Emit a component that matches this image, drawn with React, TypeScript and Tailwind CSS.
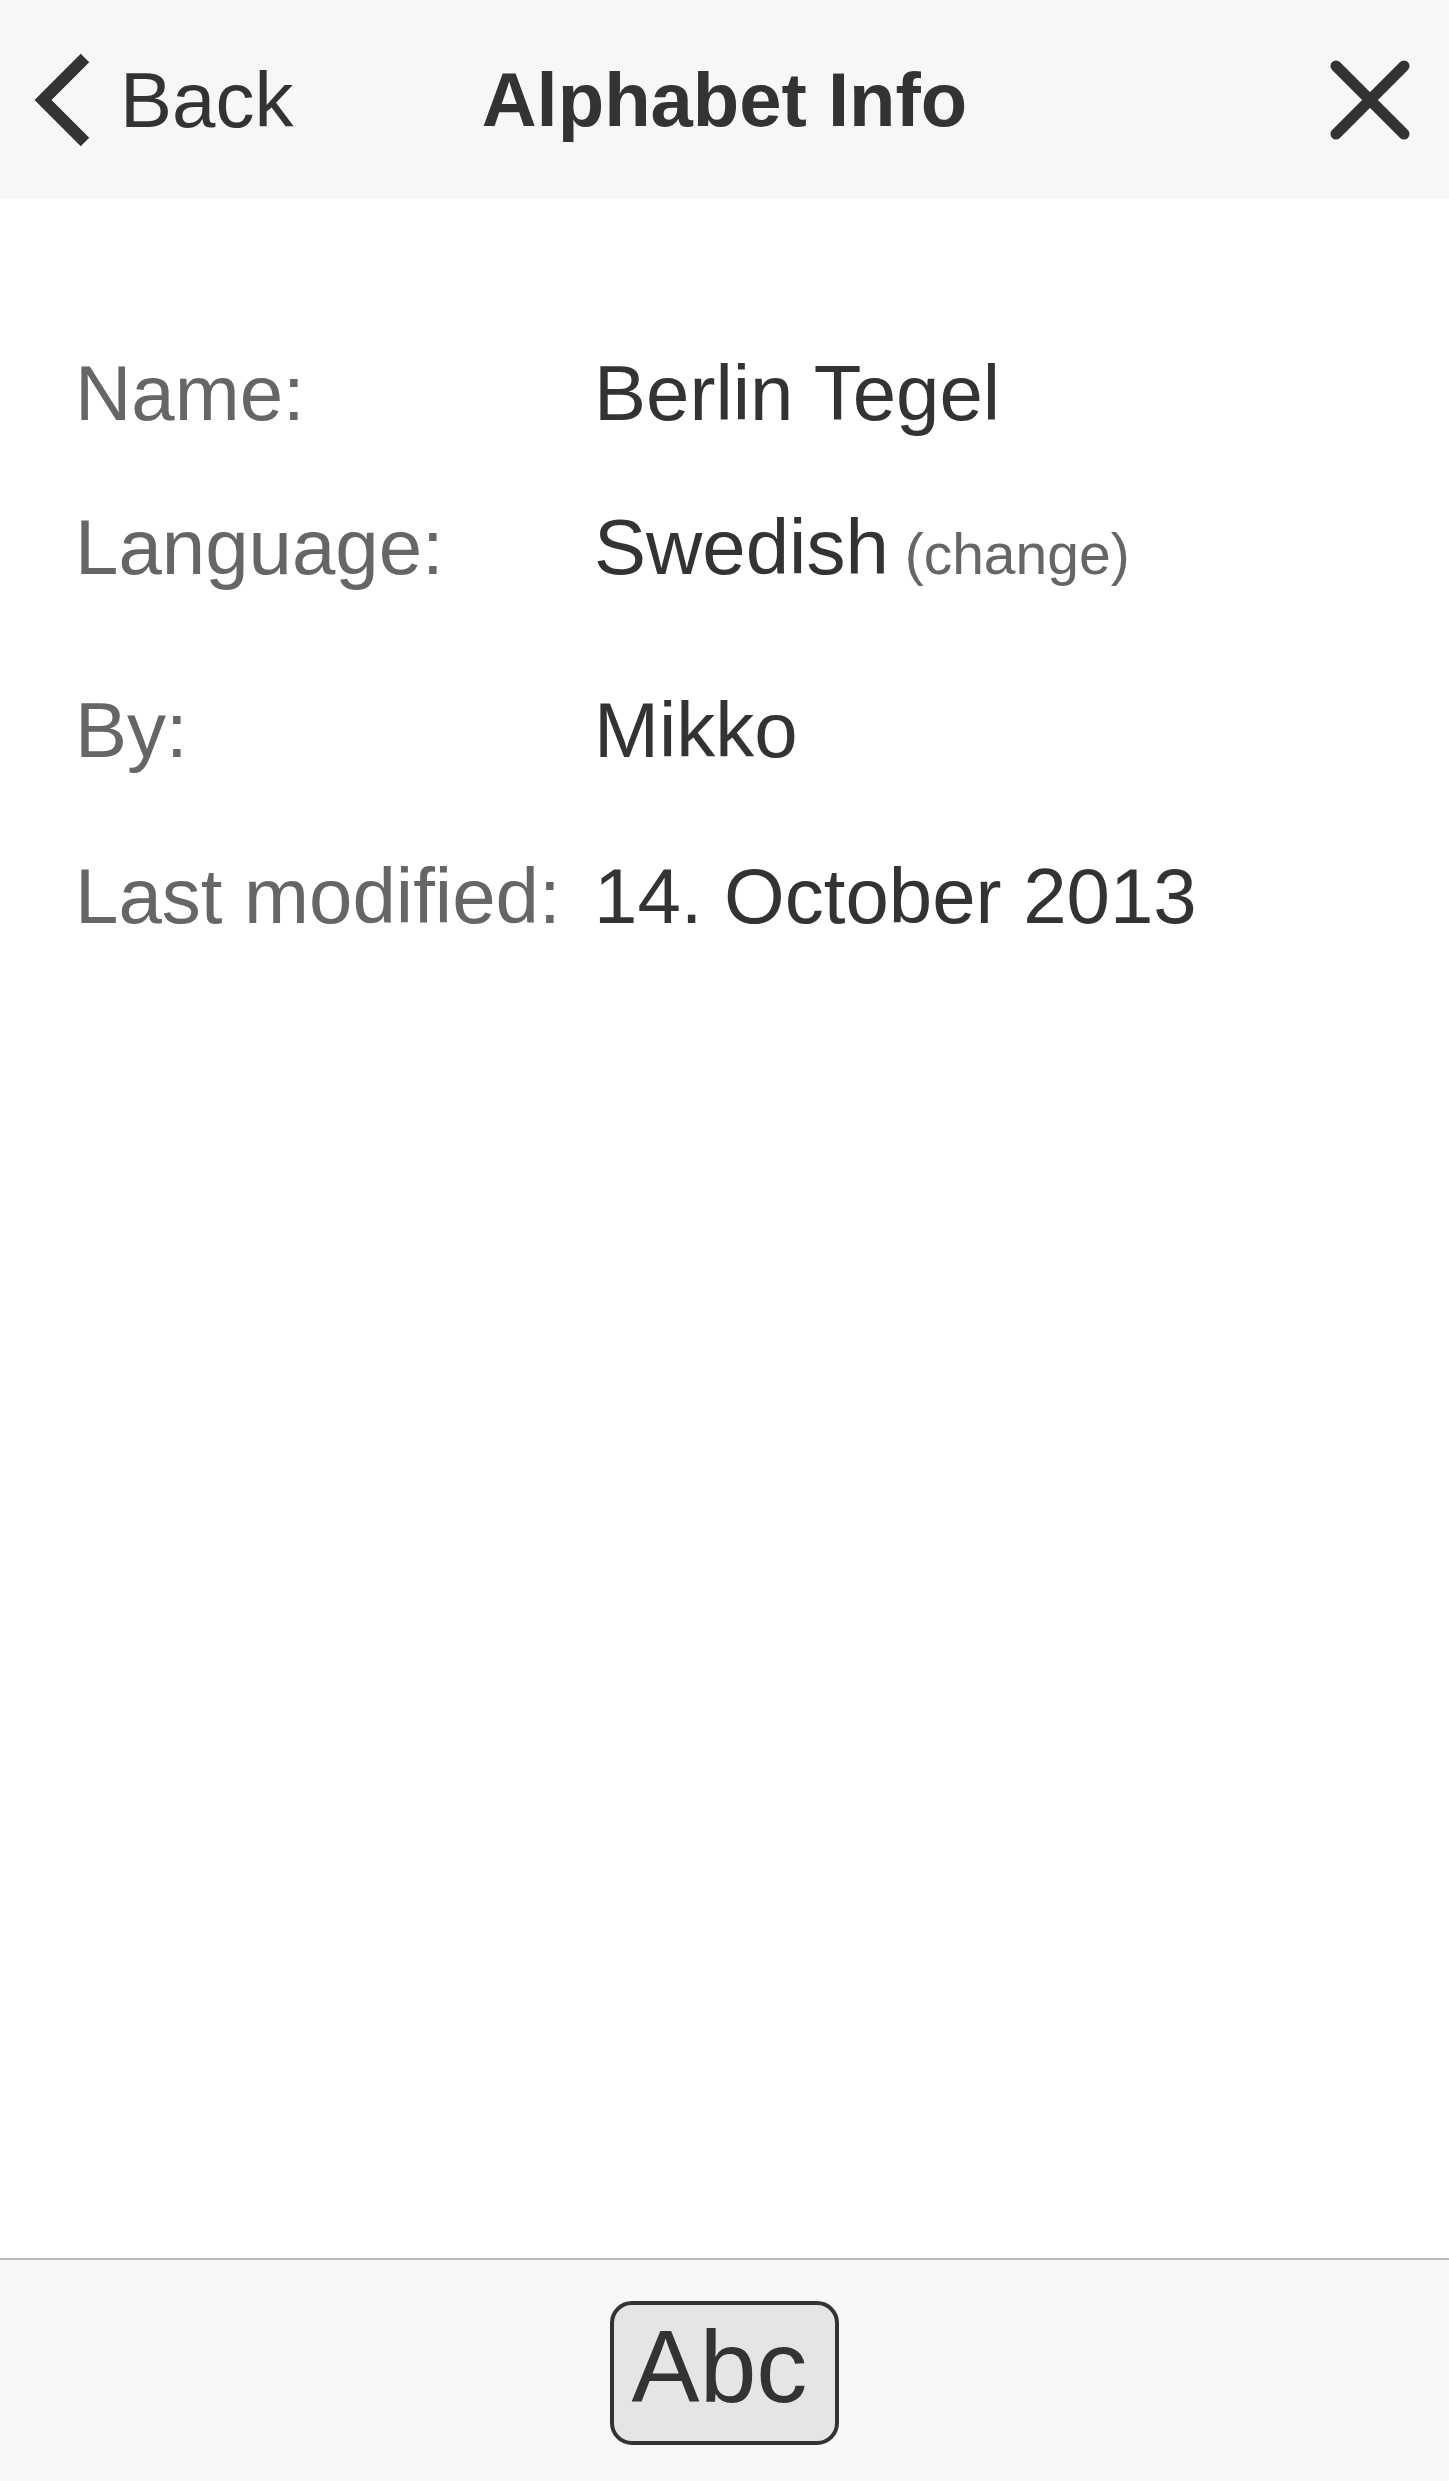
function ChevronLeft() {
  return (
    <svg width="60" height="96" viewBox="0 0 60 96" fill="none" aria-hidden>
      <path d="M53 6 L11 48 L53 90" stroke="#333333" strokeWidth="12" strokeLinecap="butt" strokeLinejoin="miter" />
    </svg>
  )
}

function CloseIcon() {
  return (
    <svg width="84" height="84" viewBox="0 0 84 84" fill="none" aria-hidden>
      <path d="M8 8 L76 76 M76 8 L8 76" stroke="#333333" strokeWidth="11" strokeLinecap="round" />
    </svg>
  )
}

function InfoRow({ label, children, className = '' }: { label: string; children: React.ReactNode; className?: string }) {
  return (
    <div className={`grid grid-cols-[519px_1fr] leading-[88px] ${className}`}>
      <div className="text-[#666666]">{label}</div>
      <div className="text-[#333333] whitespace-nowrap">{children}</div>
    </div>
  )
}

export default function App() {
  return (
    <div
      className="w-full h-[2481px] flex flex-col bg-white"
      style={{ fontFamily: '"Liberation Sans", Arial, sans-serif' }}
    >
      {/* Header */}
      <div className="h-[199px] shrink-0 bg-[#f7f7f7] grid grid-cols-[1fr_auto_1fr] items-center">
        <div className="flex items-center pl-[32px]">
          <ChevronLeft />
          <span className="ml-[28px] text-[78px] leading-none text-[#333333]">Back</span>
        </div>
        <div className="text-[76px] leading-none font-bold text-[#333333]">Alphabet Info</div>
        <div className="flex justify-end pr-[37px]">
          <CloseIcon />
        </div>
      </div>

      {/* Details */}
      <div className="flex-1 pt-[150px] pl-[75px] pr-[72px] text-[78px]">
        <InfoRow label="Name:">Berlin Tegel</InfoRow>
        <InfoRow label="Language:" className="mt-[66px]">
          Swedish<span className="text-[57px] text-[#666666]"> (change)</span>
        </InfoRow>
        <InfoRow label="By:" className="mt-[88px]">Mikko</InfoRow>
        <InfoRow label="Last modified:" className="mt-[78px]">14. October 2013</InfoRow>
      </div>

      {/* Bottom bar */}
      <div className="h-[223px] shrink-0 border-t-2 border-[#bbbbbb] bg-[#f7f7f7] flex justify-center pt-[41px]">
        <div className="w-[229px] h-[144px] border-4 border-[#333333] rounded-[22px] bg-[#e5e5e5] flex items-center justify-center pb-[12px] pr-[10px]">
          <span className="text-[102px] leading-none text-[#333333]">Abc</span>
        </div>
      </div>
    </div>
  )
}
